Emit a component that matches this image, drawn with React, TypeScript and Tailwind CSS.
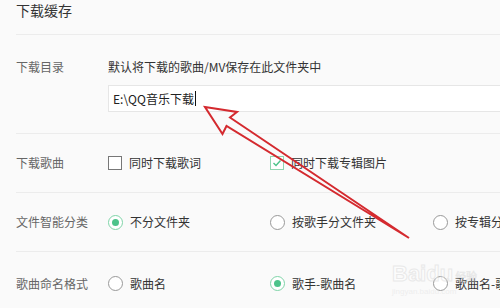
import React from 'react';

const font = { fontFamily: '"Noto Sans CJK SC", "Noto Sans", sans-serif' };

function Radio({ on }: { on?: boolean }) {
    return (
        <span className={`flex h-[15px] w-[15px] shrink-0 items-center justify-center rounded-full border bg-white ${on ? 'border-[#7fd4a8]' : 'border-[#999]'}`}>
            {on && <span className="h-[7px] w-[7px] rounded-full bg-[#4cc38a]" />}
        </span>
    );
}

function Check({ on }: { on?: boolean }) {
    return (
        <span className={`flex h-[14px] w-[14px] shrink-0 items-center justify-center border bg-white ${on ? 'border-[#8fd6b0]' : 'border-[#777]'}`}>
            {on && (
                <svg width="10" height="10" viewBox="0 0 10 10">
                    <path d="M1.5 5 L4 7.5 L8.5 2.5" fill="none" stroke="#4cc38a" strokeWidth="1.4" />
                </svg>
            )}
        </span>
    );
}

function Opt({ children, kind, on }: { children: React.ReactNode; kind: 'radio' | 'check'; on?: boolean }) {
    return (
        <div className="flex items-center gap-[7px] whitespace-nowrap text-[12px] text-[#333]">
            {kind === 'radio' ? <Radio on={on} /> : <Check on={on} />}
            <span>{children}</span>
        </div>
    );
}

export default function App() {
    const row = "grid grid-cols-[92px_162px_163px_163px] items-center border-t border-[#ececec]";
    const label = "text-[12px] text-[#666] whitespace-nowrap";

    return (
        <div className="relative h-[308px] w-[500px] overflow-hidden bg-[#fafafa] pl-4" style={font}>
            {/* 标题 */}
            <div className="h-[34px] text-[14px] leading-[21px] text-[#333]">下载缓存</div>

            {/* 下载目录 */}
            <div className="flex border-t border-[#ececec] pt-[24px] pb-[21px]">
                <div className={`w-[92px] shrink-0 leading-[16px] ${label}`}>下载目录</div>
                <div className="min-w-0 flex-1">
                    <div className="text-[12px] leading-[16px] text-[#333] whitespace-nowrap">默认将下载的歌曲/MV保存在此文件夹中</div>
                    <div className="mt-[10px] flex h-[27px] w-[440px] items-center border border-[#e6e6e6] bg-white pl-[4px] text-[12px] text-[#222]">
                        <span>E:\QQ音乐下载</span>
                        <span className="ml-[1px] h-[15px] w-px bg-[#111]" />
                    </div>
                </div>
            </div>

            {/* 下载歌曲 */}
            <div className={`${row} h-[59px]`}>
                <div className={label}>下载歌曲</div>
                <Opt kind="check">同时下载歌词</Opt>
                <Opt kind="check" on>同时下载专辑图片</Opt>
            </div>

            {/* 文件智能分类 */}
            <div className={`${row} h-[59px]`}>
                <div className={label}>文件智能分类</div>
                <Opt kind="radio" on>不分文件夹</Opt>
                <Opt kind="radio">按歌手分文件夹</Opt>
                <Opt kind="radio">按专辑分文件夹</Opt>
            </div>

            {/* 歌曲命名格式 */}
            <div className={`${row} h-[62px] pt-[2px]`}>
                <div className={label}>歌曲命名格式</div>
                <Opt kind="radio">歌曲名</Opt>
                <Opt kind="radio" on>歌手-歌曲名</Opt>
                <Opt kind="radio">歌曲名-歌手</Opt>
            </div>

            {/* 水印 */}
            <div className="pointer-events-none absolute left-[392px] top-[262px] flex flex-col items-start opacity-40">
                <div className="flex items-end">
                    <span className="text-[22px] font-bold leading-[24px] text-white [-webkit-text-stroke:1px_#d0d0d0]" style={{ fontFamily: '"Liberation Sans", sans-serif' }}>Baidu</span>
                    <span className="mb-[2px] ml-[2px] text-[11px] text-white [-webkit-text-stroke:0.6px_#c8c8c8]">经验</span>
                </div>
                <span className="text-[8px] text-[#dcdcdc]" style={{ fontFamily: '"Liberation Sans", sans-serif' }}>jingyan.baidu.com</span>
            </div>

            {/* 红色箭头 */}
            <svg className="pointer-events-none absolute left-0 top-0" width="500" height="308" viewBox="0 0 500 308">
                <path
                    d="M205 107 L237 112 L230 117.5 L409 238 L226.5 126 L222.5 134 Z"
                    fill="none"
                    stroke="#d42a2f"
                    strokeWidth="2"
                    strokeLinejoin="miter"
                />
            </svg>
        </div>
    );
}
